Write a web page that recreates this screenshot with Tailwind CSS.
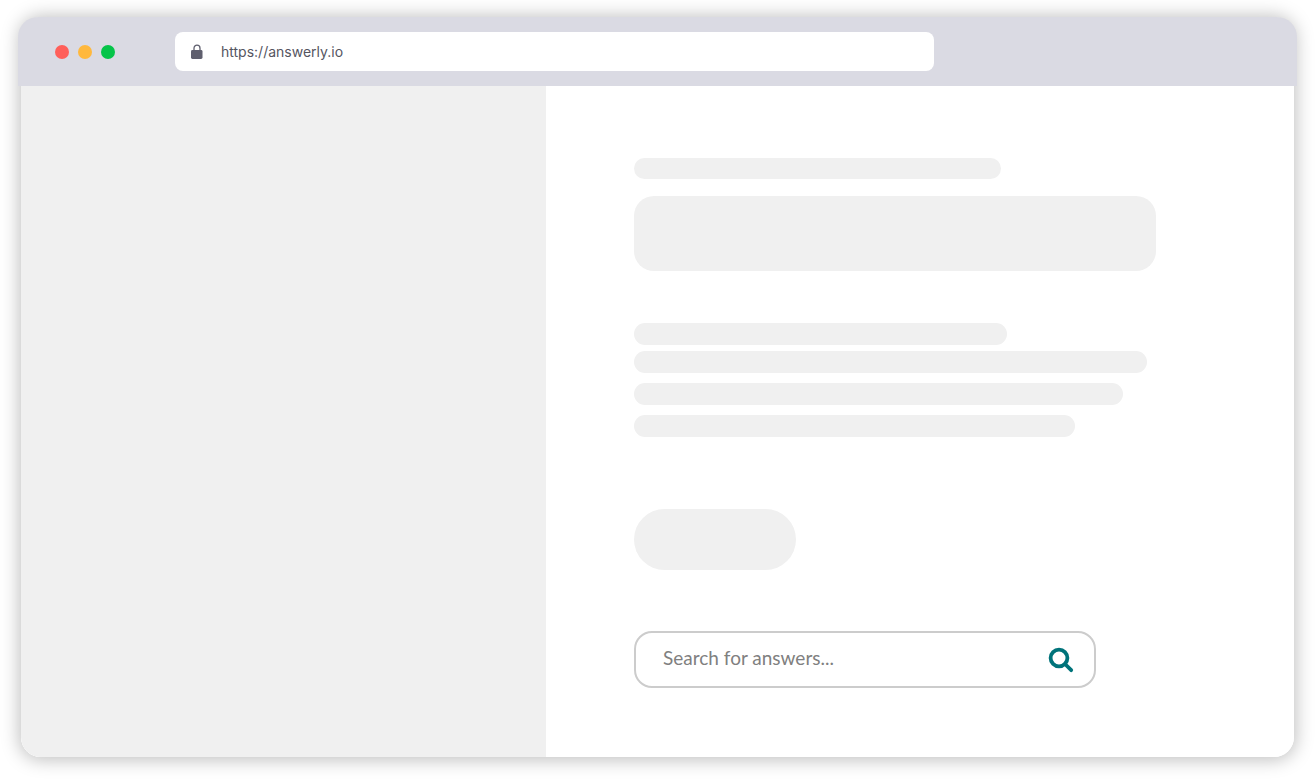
<!DOCTYPE html>
<html lang="en">
<head>
    <meta charset="UTF-8">
    <meta name="viewport" content="width=device-width, initial-scale=1.0">
    <title>Answerly</title>
    <script src="https://cdn.jsdelivr.net/npm/@tailwindcss/browser@4"></script>
</head>
<body class="min-h-screen bg-white flex flex-col px-[21px] pt-[17px] pb-[22px]">
    <!-- Browser window -->
    <div class="flex-1 flex flex-col rounded-[20px] shadow-[0_1px_18px_2px_rgba(0,0,0,0.25)]">
        <!-- Title bar -->
        <header class="-mx-[3px] h-[69px] pl-[37px] flex items-center rounded-t-[20px] bg-[#dadae3]">
            <div class="flex gap-[9px]">
                <span class="w-[14px] h-[14px] rounded-full bg-[#ff5f5a]"></span>
                <span class="w-[14px] h-[14px] rounded-full bg-[#ffb83d]"></span>
                <span class="w-[14px] h-[14px] rounded-full bg-[#05c449]"></span>
            </div>
            <label class="ml-[60px] w-[759px] h-[39px] px-4 flex items-center gap-[18px] rounded-lg bg-white">
                <svg class="w-3 h-4 shrink-0" viewBox="0 0 12 16" aria-hidden="true">
                    <path d="M3 7.5V4.2a3 3 0 0 1 6 0V7.5" fill="none" stroke="#5f5f6e" stroke-width="1.3"/>
                    <rect x="0" y="6" width="11.5" height="9" rx="1.4" fill="#5f5f6e"/>
                </svg>
                <input type="text" value="https://answerly.io" aria-label="Address" class="flex-1 outline-none font-['Inter',sans-serif] text-sm text-[#55555f]">
            </label>
        </header>

        <!-- Page -->
        <main class="flex-1 flex rounded-b-[20px] overflow-hidden bg-white">
            <aside class="w-[525px] bg-[#f0f0f0]"></aside>
            <section class="flex-1 pl-[88px] pt-[72px]">
                <div class="w-[367px] h-[21px] rounded-full bg-[#f0f0f0]"></div>
                <div class="mt-[17px] w-[522px] h-[75px] rounded-[20px] bg-[#f0f0f0]"></div>

                <div class="mt-[52px] w-[373px] h-[22px] rounded-full bg-[#f0f0f0]"></div>
                <div class="mt-[6px] w-[513px] h-[22px] rounded-full bg-[#f0f0f0]"></div>
                <div class="mt-[10px] w-[489px] h-[22px] rounded-full bg-[#f0f0f0]"></div>
                <div class="mt-[10px] w-[441px] h-[22px] rounded-full bg-[#f0f0f0]"></div>

                <div class="mt-[72px] w-[162px] h-[61px] rounded-full bg-[#f0f0f0]"></div>

                <!-- Search box -->
                <form class="mt-[61px] w-[462px] h-[57px] pl-[27px] pr-5 flex items-center rounded-[18px] border-2 border-[#cccccc] bg-white">
                    <input type="search" placeholder="Search for answers..." aria-label="Search for answers" class="flex-1 pb-0.5 outline-none font-['Lato',sans-serif] text-[19px] text-[#808080] placeholder:text-[#808080]">
                    <button type="submit" aria-label="Search">
                        <svg class="w-[26px] h-[26px]" viewBox="0 0 26 26" fill="none" stroke="#00737a" aria-hidden="true">
                            <circle cx="11" cy="11" r="8.4" stroke-width="3.8"/>
                            <path d="M17 17l6.2 6.2" stroke-width="3.8" stroke-linecap="round"/>
                        </svg>
                    </button>
                </form>
            </section>
        </main>
    </div>
</body>
</html>
